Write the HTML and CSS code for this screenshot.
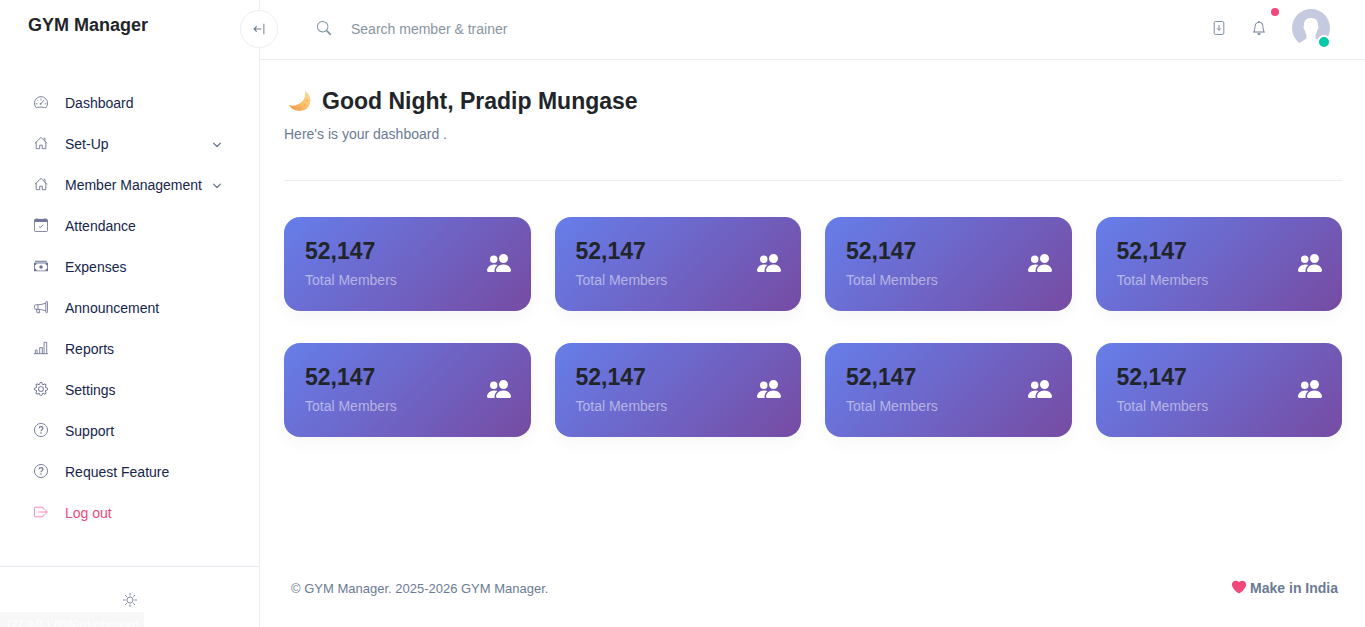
FILE: index.html
```html
<!DOCTYPE html>
<html lang="en">
<head>
<meta charset="utf-8">
<meta name="viewport" content="width=device-width, initial-scale=1">
<title>GYM Manager</title>
<link rel="stylesheet" href="styles.css">
</head>
<body>
<svg class="sprite" aria-hidden="true">
  <symbol id="house" viewBox="0 0 16 16"><path d="M2.5 7v7.5h4v-4h3v4h4V7M1.500 8 8 1.500 14.500 8M11.500 2.500h1v3" fill="none" stroke="currentColor" stroke-linejoin="round" stroke-linecap="round"/></symbol>
  <symbol id="question" viewBox="0 0 16 16"><circle cx="8" cy="8" r="7.500" fill="none" stroke="currentColor"/><path d="M5.900 6C6 4.700 6.800 4.100 8 4.100s2.200.7 2.200 1.800c0 1.700-2.200 1.700-2.200 3.500" fill="none" stroke="currentColor" stroke-width="1.400"/><circle cx="8" cy="11.500" r=".9" fill="currentColor"/></symbol>
  <symbol id="chevron" viewBox="0 0 16 16"><path d="m2.500 5 5.500 5.500L13.500 5" fill="none" stroke="currentColor" stroke-width="2" stroke-linecap="round" stroke-linejoin="round"/></symbol>
  <symbol id="people" viewBox="0 0 16 16"><path fill="currentColor" d="M7 14s-1 0-1-1 1-4 5-4 5 3 5 4-1 1-1 1zm4-6a3 3 0 1 0 0-6 3 3 0 0 0 0 6m-5.784 6A2.240 2.240 0 0 1 5 13c0-1.355.68-2.750 1.936-3.720A6.300 6.300 0 0 0 5 9c-4 0-5 3-5 4s1 1 1 1zM4.500 8a2.500 2.500 0 1 0 0-5 2.500 2.500 0 0 0 0 5"/></symbol>
</svg>
<div class="app">
  <aside class="sidebar">
    <a class="brand" href="#">GYM Manager</a>
    <button class="collapse" type="button" aria-label="Collapse sidebar"><svg class="icon-sm" viewBox="0 0 16 16" fill="none" stroke="currentColor"><path d="M11 8H2M5 4.500 1.500 8 5 11.500" stroke-width="1.500"/><path d="M14.500 1v14" stroke-width="1.300"/></svg></button>
    <nav class="nav" aria-label="Main">
      <a class="nav-item" href="#"><svg class="nav-icon" viewBox="0 0 16 16" fill="none" stroke="currentColor"><path d="M2.300 14.300A7.500 7.500 0 1 1 13.700 14.300Q13.300 14.700 12 14.300 8 13.100 4 14.300 2.700 14.700 2.300 14.300ZM8 4v2M2 10h1.700M12.300 10H14M3.700 5.700l1 1M7.500 10.300l4.300-4.700"/><circle cx="7.700" cy="10.200" r=".6"/></svg>Dashboard</a>
      <button class="nav-item" type="button"><svg class="nav-icon"><use href="#house"/></svg>Set-Up<svg class="chevron"><use href="#chevron"/></svg></button>
      <button class="nav-item" type="button"><svg class="nav-icon"><use href="#house"/></svg>Member Management<svg class="chevron"><use href="#chevron"/></svg></button>
      <a class="nav-item" href="#"><svg class="nav-icon" viewBox="0 0 16 16" fill="none" stroke="currentColor"><path d="M3.500 0v1M12.500 0v1"/><rect x=".5" y="1.500" width="15" height="14" rx="1.500"/><path d="M1 2h14v2H1z" fill="currentColor"/><path d="m5.500 9.500 1.700 1.600 3.300-3.400"/></svg>Attendance</a>
      <a class="nav-item" href="#"><svg class="nav-icon" viewBox="0 0 16 16" fill="currentColor"><path d="M1 3a1 1 0 0 1 1-1h12a1 1 0 0 1 1 1zm7 8a2 2 0 1 0 0-4 2 2 0 0 0 0 4"/><path fill-rule="evenodd" d="M0 5a1 1 0 0 1 1-1h14a1 1 0 0 1 1 1v8a1 1 0 0 1-1 1H1a1 1 0 0 1-1-1zm3 0a2 2 0 0 1-2 2v4a2 2 0 0 1 2 2h10a2 2 0 0 1 2-2V7a2 2 0 0 1-2-2z"/></svg>Expenses</a>
      <a class="nav-item" href="#"><svg class="nav-icon" viewBox="0 0 16 16" fill="none" stroke="currentColor" stroke-linejoin="round"><path d="M13.500 2.500a1 1 0 0 1 2 0v11a1 1 0 0 1-2 0zM13.500 3.500C11 4.700 7 5.500 2 5.500A1.500 1.500 0 0 0 .5 7v2A1.500 1.500 0 0 0 2 10.500c5 0 9 .8 11.500 2.200M4.500 5.500v5M2.700 10.500l.9 4h2.900l-1-4"/></svg>Announcement</a>
      <a class="nav-item" href="#"><svg class="nav-icon" viewBox="0 0 16 16" fill="none" stroke="currentColor"><path d="M0 14.500h16M1.500 14.500v-4h2v4M6.500 14.500v-7h3v7M11.500 14.500v-13h3v13"/></svg>Reports</a>
      <a class="nav-item" href="#"><svg class="nav-icon" viewBox="0 0 16 16" fill="currentColor"><path d="M8 4.754a3.246 3.246 0 1 0 0 6.492 3.246 3.246 0 0 0 0-6.492M5.754 8a2.246 2.246 0 1 1 4.492 0 2.246 2.246 0 0 1-4.492 0"/><path d="M9.796 1.343c-.527-1.790-3.065-1.790-3.592 0l-.094.319a.873.873 0 0 1-1.255.52l-.292-.16c-1.640-.892-3.433.902-2.540 2.541l.159.292a.873.873 0 0 1-.52 1.255l-.319.094c-1.790.527-1.790 3.065 0 3.592l.319.094a.873.873 0 0 1 .52 1.255l-.16.292c-.892 1.640.901 3.434 2.541 2.540l.292-.159a.873.873 0 0 1 1.255.52l.094.319c.527 1.790 3.065 1.790 3.592 0l.094-.319a.873.873 0 0 1 1.255-.52l.292.16c1.640.893 3.434-.902 2.540-2.541l-.159-.292a.873.873 0 0 1 .52-1.255l.319-.094c1.790-.527 1.790-3.065 0-3.592l-.319-.094a.873.873 0 0 1-.52-1.255l.16-.292c.893-1.640-.902-3.433-2.541-2.540l-.292.159a.873.873 0 0 1-1.255-.52zm-2.633.283c.246-.835 1.428-.835 1.674 0l.094.319a1.873 1.873 0 0 0 2.693 1.115l.291-.16c.764-.415 1.600.42 1.184 1.185l-.159.292a1.873 1.873 0 0 0 1.116 2.692l.318.094c.835.246.835 1.428 0 1.674l-.319.094a1.873 1.873 0 0 0-1.115 2.693l.16.291c.415.764-.42 1.600-1.185 1.184l-.291-.159a1.873 1.873 0 0 0-2.693 1.116l-.094.318c-.246.835-1.428.835-1.674 0l-.094-.319a1.873 1.873 0 0 0-2.692-1.115l-.292.16c-.764.415-1.600-.42-1.184-1.185l.159-.291A1.873 1.873 0 0 0 1.945 8.930l-.319-.094c-.835-.246-.835-1.428 0-1.674l.319-.094A1.873 1.873 0 0 0 3.060 4.377l-.16-.292c-.415-.764.42-1.600 1.185-1.184l.292.159a1.873 1.873 0 0 0 2.692-1.115z"/></svg>Settings</a>
      <a class="nav-item" href="#"><svg class="nav-icon"><use href="#question"/></svg>Support</a>
      <a class="nav-item" href="#"><svg class="nav-icon"><use href="#question"/></svg>Request Feature</a>
      <a class="nav-item logout" href="#"><svg class="nav-icon" viewBox="0 0 16 16" fill="none" stroke="currentColor"><path d="M10.500 5V3.500a1 1 0 0 0-1-1h-8a1 1 0 0 0-1 1v9a1 1 0 0 0 1 1h8a1 1 0 0 0 1-1V11M5 8h10M12 4.800 15.200 8 12 11.200"/></svg>Log out</a>
    </nav>
    <div class="sidebar-foot">
      <button class="icon-button" type="button" aria-label="Light theme"><svg class="icon-sm" viewBox="0 0 16 16" fill="none" stroke="currentColor"><circle cx="8" cy="8" r="3.500"/><path d="M8 0v3M8 13v3M0 8h3M13 8h3M2.300 2.300l2 2M11.700 11.700l2 2M2.300 13.700l2-2M11.700 4.300l2-2"/></svg></button>
    </div>
  </aside>
  <div class="page">
    <header class="topbar">
      <form class="search" role="search">
        <label class="search-label" for="q" aria-label="Search"><svg class="search-icon" viewBox="0 0 16 16" fill="currentColor"><path d="M11.742 10.344a6.500 6.500 0 1 0-1.397 1.398h-.001q.044.06.098.115l3.850 3.850a1 1 0 0 0 1.415-1.414l-3.850-3.850a1 1 0 0 0-.115-.1zM12 6.500a5.500 5.500 0 1 1-11 0 5.500 5.500 0 0 1 11 0"/></svg></label>
        <input class="search-input" id="q" type="search" placeholder="Search member &amp; trainer">
      </form>
      <div class="actions">
        <button class="icon-button" type="button" aria-label="Downloads"><svg class="icon-sm" viewBox="0 0 16 16" fill="none" stroke="currentColor"><rect x="2.500" y=".6" width="11" height="14.800" rx="1.500"/><path d="M8 4.500v6M5.500 8.200 8 10.700l2.500-2.500"/></svg></button>
        <button class="icon-button bell" type="button" aria-label="Notifications"><svg class="icon-sm" viewBox="0 0 16 16" fill="currentColor"><path d="M8 16a2 2 0 0 0 2-2H6a2 2 0 0 0 2 2M8 1.918l-.797.161A4 4 0 0 0 4 6c0 .628-.134 2.197-.459 3.742-.16.767-.376 1.566-.663 2.258h10.244c-.287-.692-.502-1.490-.663-2.258C12.134 8.197 12 6.628 12 6a4 4 0 0 0-3.203-3.920zM14.220 12c.223.447.481.801.78 1H1c.299-.199.557-.553.78-1C2.680 10.200 3 6.880 3 6c0-2.420 1.720-4.440 4.005-4.901a1 1 0 1 1 1.990 0A5 5 0 0 1 13 6c0 .88.32 4.200 1.220 6"/></svg><span class="alert-dot"></span></button>
        <button class="avatar" type="button" aria-label="Account"><svg class="avatar-img" viewBox="0 0 38 38"><circle cx="19" cy="19" r="19" fill="#c5cae0"/><path d="M19 9C14 9 11.800 12 12 16.500 11 17 11.500 20 12.700 21 13 23.500 14.500 25 14.500 26.500V29.500C12 31.500 9 32 6.500 35V38H31.500V35C29 32 26 31.500 23.500 29.500V26.500C23.500 25 25 23.500 25.300 21 26.500 20 27 17 26 16.500 26.200 12 24 9 19 9Z" fill="#fff"/></svg><span class="online-dot"></span></button>
      </div>
    </header>
    <main class="content">
      <div class="greeting">
        <h1 class="title"><svg class="moon" viewBox="0 0 24 24" aria-hidden="true"><defs><linearGradient id="glow" x1="1" y1="0" x2="0" y2="1"><stop offset="0" stop-color="#fde0a0"/><stop offset=".5" stop-color="#fbbf68"/><stop offset="1" stop-color="#ed9348"/></linearGradient></defs><path d="M17 2C22 5 24 11 21 17 17 23.500 6 24 1 16 7 18 12 15 15 11.500Q18 7 17 2Z" fill="url(#glow)"/><path d="M19 11.500h.5M16.500 16h.5M11 19.500h.5" stroke="#f0a555" stroke-width="1.500" stroke-linecap="round"/></svg>Good Night, Pradip Mungase</h1>
        <p class="subtitle">Here's is your dashboard .</p>
      </div>
      <section class="stats" aria-label="Statistics">
        <article class="stat"><div><h2 class="value">52,147</h2><p class="caption">Total Members</p></div><svg class="people"><use href="#people"/></svg></article>
        <article class="stat"><div><h2 class="value">52,147</h2><p class="caption">Total Members</p></div><svg class="people"><use href="#people"/></svg></article>
        <article class="stat"><div><h2 class="value">52,147</h2><p class="caption">Total Members</p></div><svg class="people"><use href="#people"/></svg></article>
        <article class="stat"><div><h2 class="value">52,147</h2><p class="caption">Total Members</p></div><svg class="people"><use href="#people"/></svg></article>
        <article class="stat"><div><h2 class="value">52,147</h2><p class="caption">Total Members</p></div><svg class="people"><use href="#people"/></svg></article>
        <article class="stat"><div><h2 class="value">52,147</h2><p class="caption">Total Members</p></div><svg class="people"><use href="#people"/></svg></article>
        <article class="stat"><div><h2 class="value">52,147</h2><p class="caption">Total Members</p></div><svg class="people"><use href="#people"/></svg></article>
        <article class="stat"><div><h2 class="value">52,147</h2><p class="caption">Total Members</p></div><svg class="people"><use href="#people"/></svg></article>
      </section>
    </main>
    <footer class="footer">
      <p class="copyright">© GYM Manager. 2025-2026 GYM Manager.</p>
      <p class="made"><svg class="heart" viewBox="0 0 16 16" aria-hidden="true"><path d="M8 15.500C-6 7 1-2.500 8 2.200 15-2.500 22 7 8 15.500Z" fill="#f0487a"/></svg>Make in India</p>
    </footer>
  </div>
</div>
<div class="link-status">127.0.0.1:8080/dashboard</div>
</body>
</html>
```
FILE: styles.css
```css
* { box-sizing: border-box; }
body { margin: 0; background: #fff; color: #6b7b93; font: 14px/21px "Liberation Sans", Arial, sans-serif; }
h1, h2, p { margin: 0; }
a { color: inherit; text-decoration: none; }
button { padding: 0; border: 0; background: none; color: inherit; font: inherit; cursor: pointer; }
svg { display: block; flex: none; }
.sprite { position: absolute; width: 0; height: 0; }
.app { display: flex; min-height: 100vh; }

.sidebar { position: relative; display: flex; flex: none; flex-direction: column; width: 260px; border-right: 1px solid #edeef5; }
.brand { padding: 12px 28px 0; color: #212529; font-size: 18px; font-weight: 700; line-height: 26px; }
.collapse { position: absolute; top: 10px; right: -19px; display: grid; place-items: center; width: 38px; height: 38px; border: 1px solid #edeef5; border-radius: 50%; background: #fff; }
.icon-sm { width: 14px; height: 14px; }
.collapse .icon-sm { width: 12px; height: 12px; }
.nav { display: flex; flex: 1; flex-direction: column; padding: 45px 37px 0 34px; }
.nav-item { display: flex; align-items: center; height: 41px; color: #16254b; white-space: nowrap; text-align: left; }
.nav-icon { width: 14px; height: 14px; margin: 0 17px 4px 0; color: #6b7493; }
.chevron { width: 10px; height: 10px; margin-left: auto; color: #6b7493; }
.logout, .logout .nav-icon { color: #f0487a; }
.logout .nav-icon { opacity: .7; }
.sidebar-foot { display: grid; place-items: center; height: 61px; padding-top: 6px; border-top: 1px solid #e6ebf5; }

.page { display: flex; flex: 1; flex-direction: column; min-width: 0; }
.topbar { display: flex; align-items: center; justify-content: space-between; height: 60px; padding: 0 35px 3px 57px; border-bottom: 1px solid #edeef5; }
.search { display: flex; flex: 1; align-items: center; gap: 20px; }
.search-icon { width: 14px; height: 14px; color: #7d929b; }
.search-input { flex: 1; height: 38px; padding: 2px 0 0; border: 0; outline: 0; background: none; color: #212529; font: inherit; }
.search-input::placeholder { color: #8795a1; opacity: 1; }
.actions { display: flex; align-items: center; gap: 26px; }
.icon-button { display: grid; place-items: center; }
.bell { position: relative; }
.alert-dot { position: absolute; top: -13px; right: -13px; width: 8px; height: 8px; border-radius: 50%; background: #f0487a; }
.avatar { position: relative; }
.avatar-img { width: 38px; height: 38px; }
.online-dot { position: absolute; right: -1px; bottom: -2px; width: 14px; height: 14px; border: 2px solid #fff; border-radius: 50%; background: #00c9a7; }

.content { flex: 1; padding: 24px 23px 24px 24px; }
.greeting { padding-bottom: 35px; border-bottom: 1px solid #edeef5; }
.title { display: flex; align-items: center; gap: 10px; padding-left: 4px; color: #212529; font-size: 23px; line-height: 34px; }
.moon { width: 24px; height: 24px; }
.subtitle { padding-top: 6px; }
.stats { display: grid; grid-template-columns: repeat(4, 1fr); gap: 32px 24px; padding-top: 36px; }
.stat { display: flex; align-items: center; justify-content: space-between; min-height: 94px; padding: 17px 20px 19px 21px; border-radius: 16px; background: linear-gradient(135deg, #667eea, #764ba2); box-shadow: 0 6px 16px rgba(0, 0, 0, .04); }
.value { color: #212529; font-size: 23px; line-height: 32px; }
.caption { padding-top: 3px; color: rgba(255, 255, 255, .5); }
.people { width: 24px; height: 24px; color: #fff; }
.footer { display: flex; align-items: center; justify-content: space-between; padding: 0 27px 28px 31px; }
.copyright { font-size: 13px; }
.made { display: flex; align-items: center; gap: 4px; font-weight: 700; }
.heart { width: 14px; height: 14px; margin-bottom: 3px; }
.link-status { position: fixed; bottom: 0; left: 0; height: 15px; padding: 3px 5px 0; border-top-right-radius: 2px; background: #f7f7f7; color: #fff; font: 11px/18px "Open Sans", sans-serif; }
```
